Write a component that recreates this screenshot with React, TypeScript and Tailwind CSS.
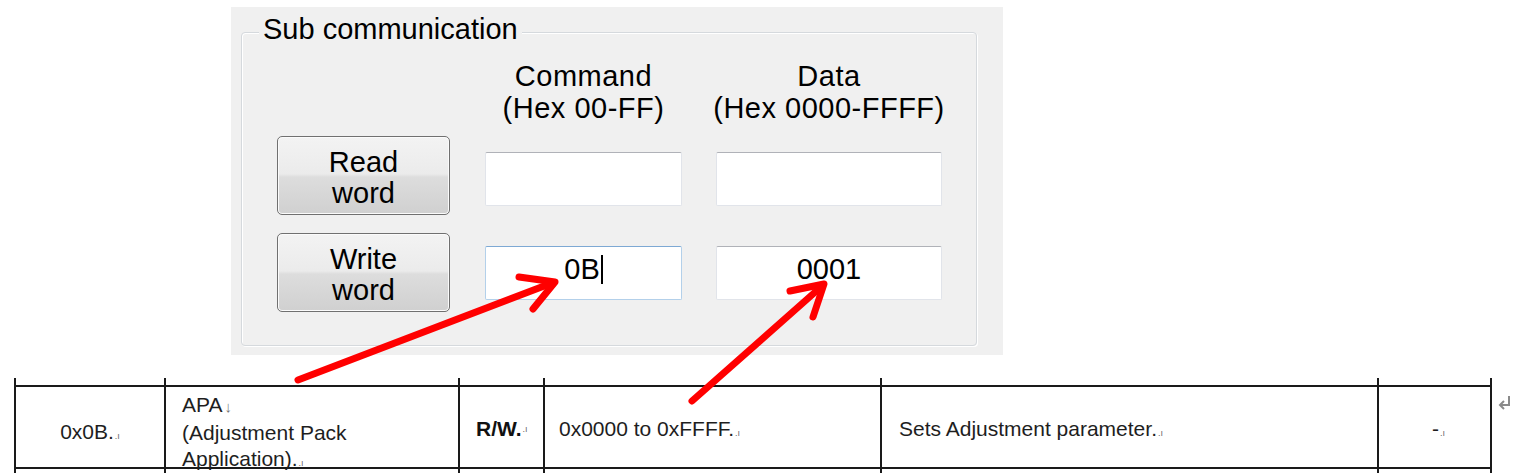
import React from 'react';

const sans = "font-['Liberation_Sans',Arial,sans-serif]";

// tiny end-of-cell marker that Word shows after each cell's text
function CellMark() {
  return <span className="ml-[1px] text-[9px] leading-none text-[#666]">.ı</span>;
}

function WinButton({ top, bottom }: { top: string; bottom: string }) {
  return (
    <div className="flex h-[79px] w-[173px] shrink-0 flex-col items-center justify-center rounded-[5px] border border-[#707070] bg-[linear-gradient(to_bottom,#f3f3f3_0%,#ebebeb_48%,#dddddd_52%,#d0d0d0_100%)] pt-[4px] text-[29px] leading-[31px] text-black shadow-[inset_0_0_0_1px_#fbfbfb]">
      <span>{top}</span>
      <span>{bottom}</span>
    </div>
  );
}

function TextBox({
  width,
  value,
  focused,
  className,
}: {
  width: string;
  value?: string;
  focused?: boolean;
  className?: string;
}) {
  return (
    <div
      className={`flex h-[54px] shrink-0 items-start justify-center rounded-[2px] border bg-white pt-[6px] text-[29px] leading-[32px] text-black ${width} ${
        focused ? 'border-[#b3d0ea] border-t-[#7ea9d4]' : 'border-[#e1e4ea] border-t-[#b0b2b8]'
      } ${className ?? ''}`}
    >
      <span>{value}</span>
      {focused && <span className="ml-[1px] mt-[2px] h-[29px] w-[2px] bg-black" />}
    </div>
  );
}

function SubCommunication() {
  return (
    <div className={`ml-[231px] mt-[7px] h-[348px] w-[772px] overflow-hidden bg-[#f0f0f0] pt-[25px] pl-[10px] ${sans}`}>
      <div className="relative h-[314px] w-[736px] rounded-[4px] border border-[#d5d9dd] shadow-[inset_1px_1px_0_#ffffff,1px_1px_0_#ffffff]">
        <span className="absolute left-[17px] top-[-20px] whitespace-nowrap bg-[#f0f0f0] px-[4px] text-[29px] leading-[32px] text-black">
          Sub communication
        </span>

        <div className="mt-[27px] flex whitespace-nowrap pl-[243px] text-[29px] leading-[32px] tracking-[0.5px] text-black">
          <div className="flex w-[197px] flex-col items-center">
            <div>Command</div>
            <div>(Hex 00-FF)</div>
          </div>
          <div className="ml-[34px] flex w-[226px] flex-col items-center">
            <div>Data</div>
            <div>(Hex 0000-FFFF)</div>
          </div>
        </div>

        <div className="mt-[12px] flex items-start pl-[35px]">
          <WinButton top="Read" bottom="word" />
          <TextBox width="w-[197px]" className="ml-[35px] mt-[16px] h-[53px]" />
          <TextBox width="w-[226px]" className="ml-[34px] mt-[16px] h-[53px]" />
        </div>

        <div className="mt-[18px] flex items-start pl-[35px]">
          <WinButton top="Write" bottom="word" />
          <TextBox width="w-[197px]" className="ml-[35px] mt-[13px]" value="0B" focused />
          <TextBox width="w-[226px]" className="ml-[34px] mt-[13px]" value="0001" />
        </div>
      </div>
    </div>
  );
}

const cols = ['w-[150px]', 'w-[294px]', 'w-[85px]', 'w-[337px]', 'w-[497px]', 'w-[115px]'];

function StubRow({ height }: { height: string }) {
  return (
    <div className={`flex ${height}`}>
      {cols.map((w, i) => (
        <div
          key={i}
          className={`${w} border-l-2 border-[#1a1a1a] ${i === cols.length - 1 ? 'border-r-2' : ''}`}
        />
      ))}
    </div>
  );
}

function RegisterTable() {
  const cell = 'h-[84px] border-y-2 border-l-2 border-[#1a1a1a] text-[21px] leading-[26px] text-[#1e1e1e] whitespace-nowrap';
  return (
    <div className={`ml-[14px] mt-[23px] ${sans}`}>
      <StubRow height="h-[7px]" />
      <div className="flex">
        <div className={`${cell} ${cols[0]} flex items-center justify-center pt-[10px]`}>
          <span>
            0x0B.
            <CellMark />
          </span>
        </div>
        <div className={`${cell} ${cols[1]} pl-[16px] pt-[5px]`}>
          <div>
            APA<span className="ml-[2px] text-[15px] text-[#777]">↓</span>
          </div>
          <div>(Adjustment Pack</div>
          <div>
            Application).
            <CellMark />
          </div>
        </div>
        <div className={`${cell} ${cols[2]} flex items-center pl-[16px] pt-[4px]`}>
          <span className="font-bold text-[#111]">R/W.</span>
          <CellMark />
        </div>
        <div className={`${cell} ${cols[3]} flex items-center pl-[14px] pt-[4px]`}>
          <span>
            0x0000 to 0xFFFF.
            <CellMark />
          </span>
        </div>
        <div className={`${cell} ${cols[4]} flex items-center pl-[17px] pt-[4px]`}>
          <span>
            Sets Adjustment parameter.
            <CellMark />
          </span>
        </div>
        <div className={`${cell} ${cols[5]} flex items-center border-r-2 pl-[53px] pt-[4px]`}>
          <span>
            -
            <CellMark />
          </span>
        </div>
        <svg className="ml-[5px] mt-[9px]" width="16" height="18" viewBox="0 0 16 18">
          <path d="M12 2 V11 H4" fill="none" stroke="#8a8a8a" strokeWidth="2" />
          <path d="M7 7 L3 11 L7 15" fill="none" stroke="#8a8a8a" strokeWidth="2" />
        </svg>
      </div>
      <StubRow height="h-[4px]" />
    </div>
  );
}

function RedArrows() {
  return (
    <svg className="pointer-events-none absolute left-0 top-0" width="1536" height="473" viewBox="0 0 1536 473">
      <g stroke="#ff0000" strokeWidth="7" fill="none" strokeLinecap="round" strokeLinejoin="round">
        <path d="M298 380 L552 283" />
        <path d="M519 277 L555 282 L533 309" />
        <path d="M692 401 L822 286" />
        <path d="M790 291 L824 284 L813 317" />
      </g>
    </svg>
  );
}

export default function App() {
  return (
    <div className="relative h-[473px] w-[1536px] overflow-hidden bg-white">
      <SubCommunication />
      <RegisterTable />
      <RedArrows />
    </div>
  );
}
